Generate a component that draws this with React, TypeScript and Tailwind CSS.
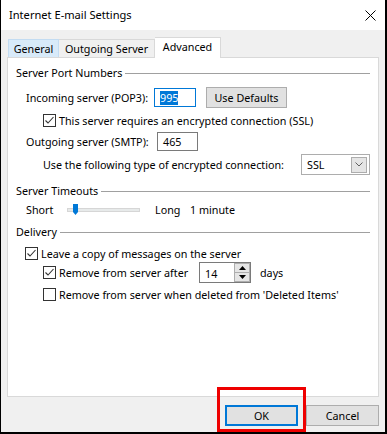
import React from "react";

const CheckBox = ({ checked }: { checked?: boolean }) => (
  <span className="w-[13px] h-[13px] shrink-0 border border-[#333333] bg-white flex items-center justify-center">
    {checked && (
      <svg width="11" height="11" viewBox="0 0 11 11">
        <path d="M1.5 5.5 L4 8 L9.5 2" fill="none" stroke="#333333" strokeWidth="1.1" />
      </svg>
    )}
  </span>
);

const GroupLabel = ({ text, className }: { text: string; className: string }) => (
  <div className={`h-[14px] flex items-center gap-[3px] pl-[8px] pr-[8px] ${className}`}>
    <span className="whitespace-nowrap">{text}</span>
    <div className="flex-1 h-px bg-[#a0a0a0]" />
  </div>
);

const App = () => {
  return (
    <div className="relative w-[387px] h-[434px] flex flex-col bg-[#f0f0f0] border-l border-r-2 border-b-2 border-black text-[10.75px] leading-[14px] text-black whitespace-nowrap font-['Noto_Sans',sans-serif]">
      {/* title bar */}
      <div className="h-[30px] bg-white flex items-center justify-between pl-[8px] pr-[9px]">
        <span className="text-[11.1px]">Internet E-mail Settings</span>
        <svg width="11" height="11" viewBox="0 0 11 11">
          <path d="M0.5 0.5 L10.5 10.5 M10.5 0.5 L0.5 10.5" stroke="#000" strokeWidth="1" />
        </svg>
      </div>

      <div className="flex-1 flex flex-col px-[6px] pt-[7px] pb-[6px]">
        {/* tabs */}
        <div className="h-[20px] flex items-end pl-[1px]">
          <div className="h-[18px] w-[51px] border border-b-0 border-[#c3dcf2] bg-[#d8eaf9] flex items-center justify-center">
            General
          </div>
          <div className="h-[18px] w-[96px] border border-b-0 border-l-0 border-[#d9d9d9] bg-[#f0f0f0] flex items-center justify-center">
            Outgoing Server
          </div>
          <div className="relative z-10 -mb-px h-[21px] w-[66px] border border-b-0 border-l-0 border-[#d9d9d9] bg-white flex items-center justify-center pb-[3px]">
            Advanced
          </div>
        </div>

        {/* panel */}
        <div className="h-[340px] border border-[#d9d9d9] bg-white flex flex-col">
          <GroupLabel text="Server Port Numbers" className="mt-[8px]" />

          <div className="mt-[7px] h-[21px] flex items-center pl-[18px]">
            <span className="w-[128px] shrink-0">Incoming server (POP3):</span>
            <div className="w-[42px] h-[19px] border border-[#0078d7] bg-white flex items-center pl-[5px]">
              <span className="bg-[#0078d7] text-white">995</span>
            </div>
            <div className="ml-[10px] w-[81px] h-[21px] border border-[#adadad] bg-[#e1e1e1] flex items-center justify-center">
              Use Defaults
            </div>
          </div>

          <div className="mt-[6px] h-[13px] flex items-center pl-[35px]">
            <CheckBox checked />
            <span className="ml-[3px]">This server requires an encrypted connection (SSL)</span>
          </div>

          <div className="mt-[5px] h-[19px] flex items-center pl-[18px]">
            <span className="w-[131px] shrink-0">Outgoing server (SMTP):</span>
            <div className="w-[41px] h-[19px] border border-[#7a7a7a] bg-white flex items-center pl-[5px]">
              465
            </div>
          </div>

          <div className="mt-[3px] h-[21px] flex items-center pl-[35px]">
            <span className="w-[258px] shrink-0">Use the following type of encrypted connection:</span>
            <div className="w-[69px] h-[21px] border border-[#adadad] bg-white flex items-center">
              <span className="flex-1 pl-[5px]">SSL</span>
              <div className="w-[16px] h-[16px] mr-[2px] border border-[#adadad] bg-[#e5e5e5] flex items-center justify-center">
                <svg width="8" height="5" viewBox="0 0 8 5">
                  <path d="M0.5 0.5 L4 4 L7.5 0.5" fill="none" stroke="#606060" strokeWidth="1" />
                </svg>
              </div>
            </div>
          </div>

          <GroupLabel text="Server Timeouts" className="mt-[9px]" />

          <div className="mt-[5px] h-[14px] flex items-center pl-[18px]">
            <span className="w-[41px] shrink-0">Short</span>
            <div className="relative w-[73px] h-[4px] border border-[#d6d6d6] bg-[#e7eaea]">
              <svg className="absolute left-[5px] top-[-5px]" width="5" height="11" viewBox="0 0 5 11">
                <path d="M0 0 H5 V8 L2.5 11 L0 8 Z" fill="#0078d7" />
              </svg>
            </div>
            <span className="ml-[15px] w-[35px]">Long</span>
            <span>1 minute</span>
          </div>

          <GroupLabel text="Delivery" className="mt-[8px]" />

          <div className="mt-[8px] h-[13px] flex items-center pl-[17px]">
            <CheckBox checked />
            <span className="ml-[3px]">Leave a copy of messages on the server</span>
          </div>

          <div className="mt-[2px] h-[21px] flex items-center pl-[35px]">
            <CheckBox checked />
            <span className="ml-[3px] w-[140px] shrink-0">Remove from server after</span>
            <div className="w-[52px] h-[21px] border border-[#7a7a7a] bg-white flex items-center">
              <span className="flex-1 pl-[5px] pt-[2px]">14</span>
              <div className="w-[16px] h-[19px] flex flex-col">
                <div className="flex-1 border border-[#adadad] bg-[#e5e5e5] flex items-center justify-center">
                  <svg width="7" height="4" viewBox="0 0 7 4">
                    <path d="M0 4 L3.5 0 L7 4 Z" fill="#000" />
                  </svg>
                </div>
                <div className="flex-1 border border-t-0 border-[#adadad] bg-[#e5e5e5] flex items-center justify-center">
                  <svg width="7" height="4" viewBox="0 0 7 4">
                    <path d="M0 0 L3.5 4 L7 0 Z" fill="#000" />
                  </svg>
                </div>
              </div>
            </div>
            <span className="ml-[9px]">days</span>
          </div>

          <div className="mt-[5px] h-[13px] flex items-center pl-[35px]">
            <CheckBox />
            <span className="ml-[3px]">Remove from server when deleted from 'Deleted Items'</span>
          </div>
        </div>

        {/* buttons */}
        <div className="mt-[8px] h-[21px] flex justify-end gap-[8px]">
          <div className="w-[73px] h-[21px] border-2 border-[#0078d7] bg-[#e1e1e1] flex items-center justify-center">
            OK
          </div>
          <div className="w-[73px] h-[21px] border border-[#adadad] bg-[#e1e1e1] flex items-center justify-center">
            Cancel
          </div>
        </div>
      </div>

      {/* red highlight annotation */}
      <div className="absolute left-[216px] top-[387px] w-[89px] h-[45px] border-[3px] border-[#ee0000]" />
    </div>
  );
};

export default App;
